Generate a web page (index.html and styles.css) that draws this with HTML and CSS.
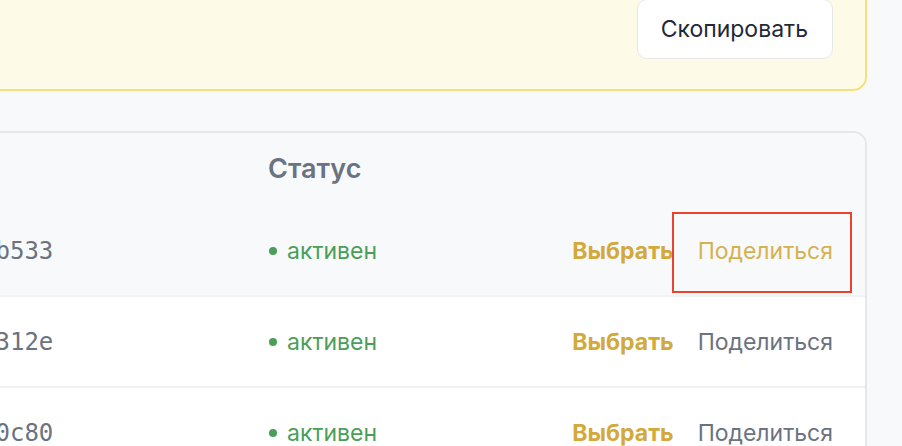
FILE: index.html
```html
<!DOCTYPE html>
<html lang="ru">
<head>
    <meta charset="utf-8">
    <title>Приглашения</title>
    <link rel="stylesheet" href="styles.css">
</head>
<body>
    <main class="page">
        <div class="content">
            <section class="invite">
                <button class="btn-copy">Скопировать</button>
            </section>

            <section class="card">
                <div class="row row-head">
                    <div></div>
                    <div class="head-cell">Статус</div>
                    <div></div>
                </div>
                <div class="rows">
                    <div class="row is-hover">
                        <div class="cell-id">e91f4c07a2b533</div>
                        <div class="status"><span class="dot"></span>активен</div>
                        <div class="actions">
                            <a class="act act-select">Выбрать</a>
                            <a class="act act-share is-marked">Поделиться</a>
                        </div>
                    </div>
                    <div class="row">
                        <div class="cell-id">5d08ab7c19312e</div>
                        <div class="status"><span class="dot"></span>активен</div>
                        <div class="actions">
                            <a class="act act-select">Выбрать</a>
                            <a class="act act-share">Поделиться</a>
                        </div>
                    </div>
                    <div class="row">
                        <div class="cell-id">b74e2f06da0c80</div>
                        <div class="status"><span class="dot"></span>активен</div>
                        <div class="actions">
                            <a class="act act-select">Выбрать</a>
                            <a class="act act-share">Поделиться</a>
                        </div>
                    </div>
                </div>
            </section>
        </div>
    </main>
</body>
</html>
```

FILE: styles.css
```css
:root {
    --color-bg: #f8f9fb;
    --color-text: #1f2937;
    --color-muted: #6b7280;
    --color-line: #e6e7eb;
    --color-divider: #f1f2f4;
    --color-gold: #d3a93b;
    --color-gold-light: #d5b24f;
    --color-green: #4b9e58;
    --color-note: #e9432e;
}

html {
    box-sizing: border-box;
}

*, *::before, *::after {
    box-sizing: inherit;
}

body {
    margin: 0;
    overflow: hidden;
    font-family: Inter, "Noto Sans", sans-serif;
    font-size: 23px;
    line-height: 36px;
    color: var(--color-text);
    background: var(--color-bg);
}

button {
    font-family: inherit;
    cursor: pointer;
}

.page {
    display: flex;
    justify-content: flex-end;
    padding-right: 35px;
}

.content {
    flex-shrink: 0;
    width: 1050px;
    margin-top: -33px;
}

/* invite link box */
.invite {
    display: flex;
    justify-content: flex-end;
    padding: 30px 32px;
    background: #fefae8;
    border: 2px solid #f6e07c;
    border-radius: 14px;
}

.btn-copy {
    padding: 11px 24px 11px 23px;
    font-size: 23px;
    line-height: 36px;
    color: var(--color-text);
    background: #fff;
    border: 1px solid var(--color-line);
    border-radius: 10px;
}

/* invites table */
.card {
    margin-top: 40px;
    background: #fff;
    border: 2px solid var(--color-line);
    border-radius: 14px;
    overflow: hidden;
}

.row {
    display: grid;
    grid-template-columns: 1fr 306px 259px;
    align-items: center;
    height: 90px;
    padding: 1px 32px 0;
}

.row-head {
    height: 72px;
    padding-top: 0;
    background: var(--color-bg);
}

.head-cell {
    font-size: 27px;
    line-height: 40px;
    font-weight: 600;
    color: var(--color-muted);
}

.rows .row + .row {
    height: 91px;
    border-top: 2px solid var(--color-divider);
}

.row.is-hover {
    background: var(--color-bg);
}

.cell-id {
    font-family: "DejaVu Sans Mono", monospace;
    font-size: 24px;
    color: var(--color-muted);
    white-space: nowrap;
}

.status {
    display: flex;
    align-items: center;
    color: var(--color-green);
}

.dot {
    width: 8px;
    height: 8px;
    margin: 0 10px 0 1px;
    border-radius: 50%;
    background: var(--color-green);
}

.actions {
    display: flex;
    justify-content: flex-end;
    gap: 24px;
}

.act {
    cursor: pointer;
}

.act-select {
    font-weight: 700;
    color: var(--color-gold);
}

.act-share {
    position: relative;
    color: var(--color-muted);
}

.is-hover .act-share {
    color: var(--color-gold-light);
}

/* marker frame drawn round the hovered link */
.act-share.is-marked::after {
    content: "";
    position: absolute;
    top: -21px;
    bottom: -24px;
    left: -26px;
    right: -19px;
    border: 2px solid var(--color-note);
}
```
